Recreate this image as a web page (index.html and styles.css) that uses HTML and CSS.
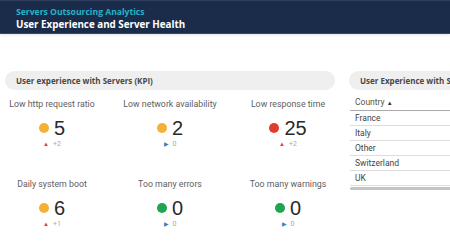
FILE: index.html
```html
<!DOCTYPE html>
<html lang="en">
<head>
    <meta charset="UTF-8">
    <meta name="viewport" content="width=device-width, initial-scale=1.0">
    <title>Servers Outsourcing Analytics</title>
    <link rel="stylesheet" href="styles.css">
</head>
<body>
    <header class="top-bar">
        <div class="app-name">Servers Outsourcing Analytics</div>
        <h1>User Experience and Server Health</h1>
    </header>

    <main class="dashboard">
        <section class="kpi-panel">
            <div class="panel-title">User experience with Servers (KPI)</div>
            <div class="kpi-grid">
                <div class="kpi">
                    <div class="kpi-label">Low http request ratio</div>
                    <div class="kpi-value"><span class="dot orange"></span>5</div>
                    <div class="kpi-delta"><span class="up">▲</span>+2</div>
                </div>
                <div class="kpi">
                    <div class="kpi-label">Low network availability</div>
                    <div class="kpi-value"><span class="dot orange"></span>2</div>
                    <div class="kpi-delta"><span class="flat">▶</span>0</div>
                </div>
                <div class="kpi">
                    <div class="kpi-label">Low response time</div>
                    <div class="kpi-value"><span class="dot red"></span>25</div>
                    <div class="kpi-delta"><span class="up">▲</span>+2</div>
                </div>
                <div class="kpi">
                    <div class="kpi-label">Daily system boot</div>
                    <div class="kpi-value"><span class="dot orange"></span>6</div>
                    <div class="kpi-delta"><span class="up">▲</span>+1</div>
                </div>
                <div class="kpi">
                    <div class="kpi-label">Too many errors</div>
                    <div class="kpi-value"><span class="dot green"></span>0</div>
                    <div class="kpi-delta"><span class="flat">▶</span>0</div>
                </div>
                <div class="kpi">
                    <div class="kpi-label">Too many warnings</div>
                    <div class="kpi-value"><span class="dot green"></span>0</div>
                    <div class="kpi-delta"><span class="flat">▶</span>0</div>
                </div>
            </div>
        </section>

        <section class="country-panel">
            <div class="panel-title">User Experience with Servers by Country</div>
            <table class="country-table">
                <thead>
                    <tr><th>Country <span class="sort">▲</span></th></tr>
                </thead>
                <tbody>
                    <tr><td>France</td></tr>
                    <tr><td>Italy</td></tr>
                    <tr><td>Other</td></tr>
                    <tr><td>Switzerland</td></tr>
                    <tr><td>UK</td></tr>
                </tbody>
            </table>
            <div class="scrollbar"></div>
        </section>
    </main>
</body>
</html>
```

FILE: styles.css
```css
body {
    margin: 0;
    width: 450px;
    height: 246px;
    overflow: hidden;
    background-color: white;
    font-family: 'Roboto', 'Liberation Sans', sans-serif;
}
.top-bar {
    height: 32px;
    background-color: #1b2c4a;
    border-top: 1px solid #2e3f60;
    border-bottom: 1px solid #34476a;
    padding-left: 16px;
    box-sizing: content-box;
    box-shadow: 0 1px 3px rgba(0, 0, 0, 0.12);
}
.app-name {
    padding-top: 6px;
    font-family: 'Open Sans', sans-serif;
    font-size: 8.6px;
    font-weight: 700;
    line-height: 11px;
    color: #27b3c4;
}
h1 {
    margin: 0;
    font-family: 'Open Sans', sans-serif;
    font-size: 9.8px;
    font-weight: 700;
    line-height: 13px;
    color: white;
}
.dashboard {
    display: flex;
    padding-top: 37px;
    padding-left: 5px;
}
.kpi-panel {
    width: 330px;
    flex-shrink: 0;
}
.panel-title {
    height: 19px;
    line-height: 19px;
    padding-left: 11px;
    border-radius: 10px;
    background-color: #efefef;
    font-family: 'Open Sans', sans-serif;
    font-size: 8px;
    font-weight: 700;
    color: #484848;
    white-space: nowrap;
    overflow: hidden;
}
.kpi-grid {
    display: grid;
    grid-template-columns: repeat(3, 118px);
    row-gap: 28px;
    margin-left: -12px;
    padding-top: 7px;
}
.kpi {
    text-align: center;
}
.kpi-label {
    font-size: 8.8px;
    line-height: 14px;
    color: #606060;
}
.kpi-value {
    margin-top: 6px;
    font-family: 'Liberation Sans', sans-serif;
    font-size: 20px;
    line-height: 22px;
    color: #2a2a2a;
}
.dot {
    display: inline-block;
    width: 10px;
    height: 10px;
    border-radius: 50%;
    margin-right: 5px;
    vertical-align: 2px;
}
.orange {
    background-color: #f6b032;
}
.red {
    background-color: #e03c2e;
}
.green {
    background-color: #1fa450;
}
.kpi-delta {
    font-size: 7px;
    line-height: 10px;
    color: #a8a8a8;
}
.up {
    color: #d9413a;
    font-size: 6px;
    margin-right: 4px;
}
.flat {
    color: #3b7ec2;
    font-size: 6px;
    margin-right: 4px;
}
.country-panel {
    margin-left: 14px;
    width: 140px;
    flex-shrink: 0;
}
.country-table {
    width: 100%;
    margin-top: 4px;
    margin-left: 1px;
    border-collapse: collapse;
    font-size: 8.5px;
    color: #444;
}
.country-table th {
    height: 16px;
    padding: 0 0 0 5px;
    text-align: left;
    font-weight: 400;
    color: #555;
    border-bottom: 1px solid #aaa;
}
.sort {
    font-size: 6px;
    color: #333;
}
.country-table td {
    height: 14px;
    padding: 0 0 0 5px;
    border-bottom: 1px solid #ddd;
}
.scrollbar {
    height: 3px;
    margin-top: 1px;
    margin-left: 1px;
    background-color: #c4c4c4;
    border-radius: 2px;
}
```
